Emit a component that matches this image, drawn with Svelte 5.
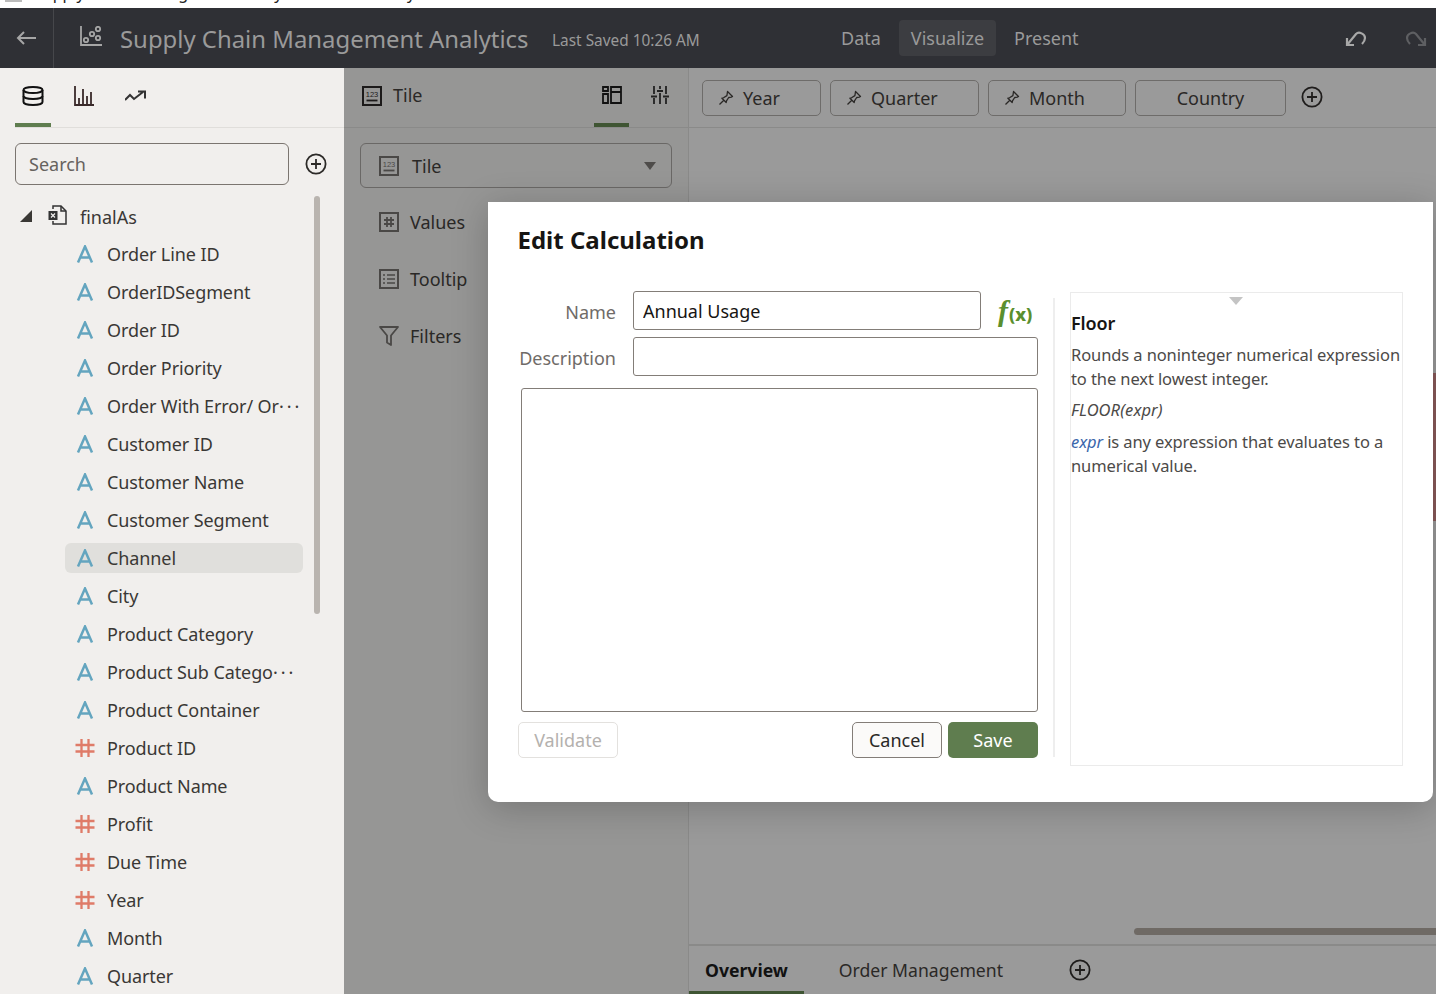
<script>
  const fields = [
    { name: "Order Line ID", type: "a" },
    { name: "OrderIDSegment", type: "a" },
    { name: "Order ID", type: "a" },
    { name: "Order Priority", type: "a" },
    { name: "Order With Error/ Or", type: "a", cut: true },
    { name: "Customer ID", type: "a" },
    { name: "Customer Name", type: "a" },
    { name: "Customer Segment", type: "a" },
    { name: "Channel", type: "a", selected: true },
    { name: "City", type: "a" },
    { name: "Product Category", type: "a" },
    { name: "Product Sub Catego", type: "a", cut: true },
    { name: "Product Container", type: "a" },
    { name: "Product ID", type: "n" },
    { name: "Product Name", type: "a" },
    { name: "Profit", type: "n" },
    { name: "Due Time", type: "n" },
    { name: "Year", type: "n" },
    { name: "Month", type: "a" },
    { name: "Quarter", type: "a" },
  ];

  const pills = [
    { name: "Year", width: 119, pin: true },
    { name: "Quarter", width: 149, pin: true },
    { name: "Month", width: 138, pin: true },
    { name: "Country", width: 151, pin: false },
  ];
</script>

{#snippet plus()}
  <svg class="plus" viewBox="0 0 22 22" fill="none" stroke="currentColor" stroke-width="1.8">
    <circle cx="11" cy="11" r="9.6" />
    <path d="M11 6v10M6 11h10" />
  </svg>
{/snippet}

{#snippet tileIcon()}
  <svg class="box-icon" viewBox="0 0 20 20" fill="none" stroke="currentColor" stroke-width="2">
    <rect x="1" y="1" width="18" height="18" />
    <text x="10" y="11" text-anchor="middle" class="mini" fill="currentColor" stroke="none">123</text>
    <path d="M4.500 14.500h11" stroke-width="1.800" />
  </svg>
{/snippet}

{#snippet pin()}
  <svg class="pin" viewBox="0 0 16 16" fill="none" stroke="currentColor" stroke-width="1.300" stroke-linejoin="round">
    <path d="M9.500 1.500l5 5-1.200.6-2.600.4-2.200 3.400-.3 1.600L3.900 8.200l1.600-.4 3.400-2.200.4-2.600zM5.800 10.200L1.500 14.500" />
  </svg>
{/snippet}

<div class="page">
  <div class="browser-strip">
    <span class="tab-icon"></span>
    <span class="browser-title">Supply Chain Management Analytics - Oracle Analytics</span>
  </div>

  <header class="topbar">
    <button class="back" aria-label="Back">
      <svg viewBox="0 0 20 14" fill="none" stroke="currentColor" stroke-width="2">
        <path d="M20 7H2M8 1L2 7l6 6" />
      </svg>
    </button>
    <svg class="logo" viewBox="0 0 22 21" fill="none" stroke="currentColor" stroke-width="1.800">
      <path d="M1 0v19h21" />
      <circle cx="6" cy="14" r="2.200" />
      <circle cx="12" cy="8" r="2.200" />
      <circle cx="18" cy="3" r="2.200" />
      <circle cx="18" cy="12" r="2.200" />
    </svg>
    <h1>Supply Chain Management Analytics</h1>
    <span class="saved">Last Saved 10:26 AM</span>
    <nav>
      <span class="nav-item">Data</span>
      <span class="nav-item active">Visualize</span>
      <span class="nav-item">Present</span>
    </nav>
    <svg class="history" viewBox="0 0 22 16" fill="none" stroke="currentColor" stroke-width="2.200">
      <path d="M9 15H2V8M2 15L11 4c3-3 9 0 9 4 0 2-1 4-3 6" />
    </svg>
    <svg class="history redo" viewBox="0 0 22 16" fill="none" stroke="currentColor" stroke-width="2.200">
      <path d="M13 15h7V8M20 15L11 4C8 1 2 4 2 8c0 2 1 4 3 6" />
    </svg>
  </header>

  <div class="body">
    <aside class="data-panel">
      <div class="panel-tabs">
        <div class="panel-tab selected">
          <svg class="db" viewBox="0 0 22 20" fill="none" stroke="#111" stroke-width="2">
            <ellipse cx="11" cy="4" rx="9.500" ry="3" />
            <path d="M1.500 4v12c0 1.700 4.200 3 9.500 3s9.500-1.300 9.500-3V4" />
            <path d="M1.500 10c0 1.700 4.200 3 9.500 3s9.500-1.300 9.500-3" />
          </svg>
        </div>
        <div class="panel-tab">
          <svg class="bars" viewBox="0 0 20 20" fill="none" stroke="#3a2a2a" stroke-width="1.800">
            <path d="M1 0v19h19M5 19v-7M9 19V3M13 19v-9M17 19V6" />
          </svg>
        </div>
        <div class="panel-tab">
          <svg class="trend" viewBox="0 0 21 12" fill="none" stroke="#333" stroke-width="2">
            <path d="M0 10l5-5 4 4 9-7M13 1.500h7v7" />
          </svg>
        </div>
      </div>

      <div class="search-row">
        <div class="search">Search</div>
        {@render plus()}
      </div>

      <div class="tree">
        <div class="tree-list">
          <div class="root">
            <span class="caret"></span>
            <svg class="file" viewBox="0 0 19 20" fill="none" stroke="#333" stroke-width="1.500">
              <path d="M5 4V1h8l5 5v13H5v-3" />
              <path d="M13 1v5h5" />
              <rect x="0.500" y="6" width="9" height="9" fill="#333" stroke="none" />
              <path d="M3 8.500l4 4M7 8.500l-4 4" stroke="#f1efed" stroke-width="1.200" />
            </svg>
            <span class="root-name">finalAs</span>
          </div>
          {#each fields as field}
            <div class="field" class:selected={field.selected}>
              {#if field.type === "a"}
                <svg class="type" viewBox="0 0 20 18" fill="none" stroke="#64a5bf" stroke-width="2.500">
                  <path d="M3 17.500L10 1.500l7 16M5.500 12.500h9" />
                </svg>
              {:else}
                <svg class="type" viewBox="0 0 20 18" fill="none" stroke="#df7b68" stroke-width="2.300">
                  <path d="M0.500 6h19M0.500 12.500h19M6.500 0v18M13.500 0v18" />
                </svg>
              {/if}
              <span class="field-name">{field.name}{#if field.cut}<span class="dots">···</span>{/if}</span>
            </div>
          {/each}
        </div>
        <div class="scrollbar"></div>
      </div>
    </aside>

    <section class="grammar">
      <div class="grammar-head">
        <span class="dark-icon">{@render tileIcon()}</span>
        <span class="grammar-title">Tile</span>
        <div class="grammar-tab selected">
          <svg class="layout-icon" viewBox="0 0 20 18" fill="none" stroke="#111" stroke-width="1.800">
            <path d="M1 1h5v4H1zM1 8h5v9H1zM9 1h10v16H9zM9 6h10" />
          </svg>
        </div>
        <div class="grammar-tab">
          <svg class="sliders" viewBox="0 0 18 18" fill="none" stroke="#222" stroke-width="1.800">
            <path d="M3 0v8M3 12v6M0 10.500h6M9 0v3M9 7v11M6 5h6M15 0v8M15 12v6M12 10.500h6" />
          </svg>
        </div>
      </div>

      <div class="viz-select">
        <span class="soft-icon">{@render tileIcon()}</span>
        <span>Tile</span>
        <span class="select-caret"></span>
      </div>

      <div class="edge-row">
        <svg class="box-icon soft-icon" viewBox="0 0 20 20" fill="none" stroke="currentColor" stroke-width="2">
          <rect x="1" y="1" width="18" height="18" />
          <path d="M5 8h10M5 12h10M8 5v10M12 5v10" stroke-width="1.800" />
        </svg>
        <span>Values</span>
      </div>
      <div class="edge-row">
        <svg class="box-icon soft-icon" viewBox="0 0 20 20" fill="none" stroke="currentColor" stroke-width="2">
          <rect x="1" y="1" width="18" height="18" />
          <path d="M4 6h2M8 6h8M4 10h2M8 10h8M4 14h2M8 14h8" stroke-width="1.500" />
        </svg>
        <span>Tooltip</span>
      </div>
      <div class="edge-row">
        <svg class="box-icon soft-icon funnel" viewBox="0 0 20 20" fill="none" stroke="currentColor" stroke-width="1.800">
          <path d="M1 1h18l-7 8.500V19l-4-2.500V9.500z" stroke-linejoin="round" />
        </svg>
        <span>Filters</span>
      </div>
    </section>

    <main class="canvas">
      <div class="filter-bar">
        {#each pills as pill}
          <div class="pill" class:no-pin={!pill.pin} style="width: {pill.width}px">
            {#if pill.pin}{@render pin()}{/if}
            <span>{pill.name}</span>
          </div>
        {/each}
        <span class="bar-plus">{@render plus()}</span>
      </div>
      <div class="canvas-area">
        <div class="h-scroll"></div>
      </div>
      <div class="sheets">
        <div class="sheet current">Overview</div>
        <div class="sheet">Order Management</div>
        <span class="sheet-plus">{@render plus()}</span>
      </div>
    </main>
  </div>

  <div class="edge-mark"></div>

  <div class="dialog">
    <h2>Edit Calculation</h2>
    <div class="dialog-body">
      <div class="editor">
        <div class="form-row">
          <label for="calc-name">Name</label>
          <input id="calc-name" class="name-input" value="Annual Usage" />
          <span class="fx"><i>f</i><b>(x)</b></span>
        </div>
        <div class="form-row">
          <label for="calc-desc">Description</label>
          <input id="calc-desc" class="desc-input" />
        </div>
        <textarea aria-label="Expression"></textarea>
        <div class="actions">
          <button class="btn validate" disabled>Validate</button>
          <span class="spacer"></span>
          <button class="btn cancel">Cancel</button>
          <button class="btn save">Save</button>
        </div>
      </div>
      <div class="divider"></div>
      <div class="help">
        <span class="help-caret"></span>
        <h3>Floor</h3>
        <p class="lead">Rounds a noninteger numerical expression to the next lowest integer.</p>
        <p class="syntax">FLOOR(expr)</p>
        <p><em>expr</em> is any expression that evaluates to a numerical value.</p>
      </div>
    </div>
  </div>
</div>

<style>
  :global(body) {
    margin: 0;
    background: #fff;
  }

  .page {
    position: relative;
    width: 1436px;
    height: 994px;
    overflow: hidden;
    font-family: "Noto Sans", "Open Sans", sans-serif;
    color: #3a3835;
  }

  .browser-strip {
    position: relative;
    height: 8px;
    overflow: hidden;
    background: #fff;
  }

  .tab-icon {
    position: absolute;
    left: 5px;
    top: 0;
    width: 17px;
    height: 2px;
    background: #bbb;
  }

  .browser-title {
    position: absolute;
    left: 34px;
    top: -19px;
    font-size: 16px;
    line-height: 24px;
    color: #222;
    white-space: nowrap;
  }

  .topbar {
    display: flex;
    align-items: center;
    height: 60px;
    background: #2f3035;
    color: #9a9a9a;
  }

  .back {
    display: flex;
    align-items: center;
    justify-content: center;
    width: 54px;
    height: 60px;
    padding: 0 2px 1px 0;
    border: 0;
    border-right: 1px solid #46474b;
    background: none;
    color: #a6a6a6;
    box-sizing: border-box;
  }

  .back svg {
    width: 20px;
    height: 14px;
  }

  .logo {
    width: 22px;
    height: 21px;
    margin: -3px 0 0 26px;
    color: #a6a6a6;
  }

  h1 {
    width: 408px;
    margin: 2px 0 0 18px;
    font-size: 23.900px;
    font-weight: 400;
    line-height: 32px;
    white-space: nowrap;
  }

  .saved {
    margin: 5px 0 0 24px;
    width: 148px;
    font-size: 15.400px;
    white-space: nowrap;
  }

  nav {
    display: flex;
    align-items: center;
    margin-left: 129px;
  }

  .nav-item {
    padding: 0 12px;
    height: 36px;
    line-height: 36px;
    font-size: 18px;
    margin-right: 6px;
  }

  .nav-item.active {
    background: #3c3d41;
    border-radius: 4px;
    color: #999;
  }

  .history {
    width: 22px;
    height: 16px;
    margin: 0 0 0 248px;
    color: #a8a8a8;
  }

  .history.redo {
    margin-left: 38px;
    color: #5e5f62;
  }

  .body {
    display: flex;
    height: 926px;
  }

  .data-panel {
    width: 344px;
    flex: none;
    background: #f1efed;
    overflow: hidden;
  }

  .panel-tabs {
    display: flex;
    height: 59px;
    margin-left: 15px;
    gap: 16px;
    border-bottom: 1px solid #e0dedb;
  }

  .panel-tab {
    position: relative;
    display: flex;
    justify-content: center;
    width: 36px;
    padding-top: 18px;
    box-sizing: border-box;
  }

  .panel-tab.selected::after,
  .grammar-tab.selected::after {
    content: "";
    position: absolute;
    left: 0;
    right: 0;
    bottom: 0;
    height: 4px;
    background: #5f7d4f;
  }

  .db {
    width: 22px;
    height: 20px;
  }

  .bars {
    width: 20px;
    height: 20px;
    margin-left: -2px;
  }

  .trend {
    width: 21px;
    height: 12px;
    margin: 4px 0 0 -4px;
  }

  .search-row {
    display: flex;
    align-items: center;
    margin: 15px 0 0 15px;
    color: #2c2a28;
  }

  .search {
    width: 274px;
    height: 42px;
    box-sizing: border-box;
    padding-left: 13px;
    border: 1px solid #7b7570;
    border-radius: 6px;
    font-size: 18px;
    line-height: 40px;
    color: #66625e;
  }

  .plus {
    display: block;
    width: 22px;
    height: 22px;
  }

  .search-row .plus {
    margin-left: 16px;
  }

  .tree {
    display: flex;
    margin-top: 11px;
  }

  .tree-list {
    width: 303px;
    flex: none;
    padding-top: 1px;
  }

  .root {
    display: flex;
    align-items: center;
    height: 38px;
    margin-bottom: 4px;
    font-size: 18px;
    padding-left: 20px;
  }

  .root-name {
    margin-top: 2px;
  }

  .caret {
    width: 0;
    height: 0;
    border-style: solid;
    border-width: 0 0 12px 12px;
    border-color: transparent transparent #3a3835 transparent;
  }

  .file {
    width: 19px;
    height: 20px;
    margin: -2px 13px 0 16px;
  }

  .field {
    display: flex;
    align-items: center;
    height: 30px;
    margin: 0 0 8px 65px;
    padding-left: 10px;
    border-radius: 6px;
    font-size: 18px;
    letter-spacing: -0.1px;
  }

  .field.selected {
    background: #e0dfdc;
  }

  .type {
    width: 20px;
    height: 18px;
    flex: none;
  }

  .field-name {
    margin-left: 12px;
    white-space: nowrap;
  }

  .dots {
    letter-spacing: 3px;
  }

  .scrollbar {
    width: 6px;
    height: 418px;
    margin: 0 0 0 11px;
    border-radius: 3px;
    background: #b9b4af;
  }

  .grammar {
    width: 345px;
    flex: none;
    background: #969695;
    border-right: 1px solid #8a8a89;
    box-sizing: border-box;
    color: #2a2826;
    font-size: 18px;
  }

  .grammar-head {
    display: flex;
    align-items: center;
    height: 59px;
    padding-left: 18px;
    border-bottom: 1px solid #8a8a89;
  }

  .dark-icon {
    color: #1c1a1a;
    display: flex;
    margin-top: -3px;
  }

  .grammar-title {
    width: 208px;
    margin: -5px 0 0 11px;
  }

  .grammar-tab {
    position: relative;
    display: flex;
    align-items: center;
    justify-content: center;
    width: 36px;
    height: 59px;
    padding-bottom: 5px;
    margin-right: 12px;
    box-sizing: border-box;
  }

  .grammar-tab.selected::after {
    background: #3f5533;
  }

  .layout-icon {
    width: 20px;
    height: 18px;
    margin-left: 1px;
  }

  .sliders {
    width: 18px;
    height: 18px;
    margin-left: 2px;
  }

  .box-icon {
    display: block;
    width: 20px;
    height: 20px;
  }

  .mini {
    font-family: "Liberation Sans", sans-serif;
    font-size: 7.500px;
  }

  .soft-icon {
    color: #4a4846;
    display: block;
  }

  .viz-select {
    display: flex;
    align-items: center;
    gap: 13px;
    width: 312px;
    height: 45px;
    margin: 15px 0 0 16px;
    padding: 0 15px 0 18px;
    box-sizing: border-box;
    border: 1px solid #6a6866;
    border-radius: 6px;
  }

  .select-caret {
    margin-left: auto;
    width: 0;
    height: 0;
    border-style: solid;
    border-width: 8px 6px 0;
    border-color: #4e4c4a transparent transparent;
  }

  .edge-row {
    display: flex;
    align-items: center;
    gap: 11px;
    height: 38px;
    margin-left: 35px;
    margin-bottom: 19px;
  }

  .viz-select + .edge-row {
    margin-top: 15px;
  }

  .funnel {
    width: 22px;
    margin: 0 -1px;
  }

  .canvas {
    flex: 1;
    display: flex;
    flex-direction: column;
    min-width: 0;
    background: #9a9a9a;
    color: #2a2826;
    font-size: 18px;
  }

  .filter-bar {
    display: flex;
    align-items: center;
    flex: none;
    height: 60px;
    padding: 1px 0 0 13px;
    gap: 9px;
    border-bottom: 1px solid #8a8a89;
    box-sizing: border-box;
  }

  .pill {
    display: flex;
    align-items: center;
    gap: 9px;
    height: 36px;
    padding-left: 15px;
    box-sizing: border-box;
    border: 1px solid #6e6c6a;
    border-radius: 5px;
  }

  .pill.no-pin {
    justify-content: center;
    padding-left: 0;
  }

  .pin {
    width: 16px;
    height: 16px;
    flex: none;
  }

  .bar-plus {
    margin: -2px 0 0 6px;
    color: #1f1d1c;
  }

  .canvas-area {
    position: relative;
    flex: 1;
    min-height: 0;
  }

  .h-scroll {
    position: absolute;
    left: 445px;
    right: 0;
    bottom: 9px;
    height: 7px;
    border-radius: 4px 0 0 4px;
    background: #6f6a65;
  }

  .sheets {
    display: flex;
    align-items: center;
    flex: none;
    height: 50px;
    box-sizing: border-box;
    border-top: 2px solid #8a8a89;
    font-size: 17.600px;
  }

  .sheet {
    position: relative;
    display: flex;
    align-items: center;
    height: 100%;
    padding: 0 16px;
    margin-right: 19px;
    white-space: nowrap;
  }

  .sheet.current {
    font-weight: 700;
    color: #111;
  }

  .sheet.current::after {
    content: "";
    position: absolute;
    left: 0;
    right: 0;
    bottom: 0;
    height: 3px;
    background: #3f5533;
  }

  .sheet-plus {
    margin: 0 0 0 31px;
    color: #1f1d1c;
  }

  .edge-mark {
    position: absolute;
    right: 0;
    top: 373px;
    width: 3px;
    height: 148px;
    background: #8a5a5a;
  }

  .dialog {
    position: absolute;
    left: 488px;
    top: 202px;
    width: 945px;
    height: 600px;
    padding: 22px 30px 0;
    box-sizing: border-box;
    background: #fff;
    border-radius: 0 0 10px 10px;
    box-shadow: 0 6px 36px rgba(0, 0, 0, 0.22);
  }

  h2 {
    margin: 0 0 0 -0.500px;
    font-size: 24px;
    font-weight: 700;
    line-height: 32px;
    color: #161513;
  }

  .dialog-body {
    display: flex;
    margin-top: 36px;
  }

  .editor {
    width: 520px;
    flex: none;
    margin-top: -1px;
  }

  .form-row {
    display: flex;
    align-items: center;
    margin-bottom: 7px;
  }

  label {
    width: 98px;
    margin: 2px 17px 0 0;
    text-align: right;
    font-size: 18px;
    color: #6f6b68;
    white-space: nowrap;
  }

  input {
    height: 39px;
    padding: 0 9px;
    box-sizing: border-box;
    border: 1px solid #837d78;
    border-radius: 3px;
    font: inherit;
    font-size: 18px;
    color: #161513;
    background: #fff;
    outline: none;
  }

  .name-input {
    width: 348px;
  }

  .desc-input {
    width: 405px;
  }

  .fx {
    display: flex;
    align-items: baseline;
    margin-left: 17px;
    color: #5a8f2e;
  }

  .fx i {
    font-family: "Liberation Serif", serif;
    font-size: 30px;
    font-weight: 700;
    line-height: 30px;
  }

  .fx b {
    margin-left: 1px;
    font-size: 18px;
    font-weight: 800;
  }

  textarea {
    display: block;
    width: 517px;
    height: 324px;
    margin: 12px 0 10px 3px;
    box-sizing: border-box;
    border: 1px solid #837d78;
    border-radius: 3px;
    resize: none;
    outline: none;
    background: #fff;
  }

  .actions {
    display: flex;
    gap: 6px;
  }

  .spacer {
    flex: 1;
  }

  .btn {
    height: 36px;
    box-sizing: border-box;
    border-radius: 5px;
    font: inherit;
    font-size: 18px;
    padding: 0;
  }

  .validate {
    width: 100px;
    border: 1px solid #e3e1de;
    background: #fff;
    color: #b4b1ae;
  }

  .cancel {
    width: 90px;
    border: 1px solid #837d78;
    background: #fbfaf9;
    color: #2a2826;
  }

  .save {
    width: 90px;
    border: 0;
    background: #5f7d4f;
    color: #fff;
  }

  .divider {
    width: 2px;
    height: 459px;
    margin: 6px 0 0 15px;
    background: #eeeeee;
  }

  .help {
    position: relative;
    width: 333px;
    height: 474px;
    margin-left: 15px;
    box-sizing: border-box;
    border: 1px solid #ebebeb;
    padding-top: 18px;
    font-size: 16.500px;
    letter-spacing: -0.1px;
    line-height: 24px;
    color: #4c4a48;
  }

  .help-caret {
    position: absolute;
    left: 158px;
    top: 4px;
    width: 0;
    height: 0;
    border-style: solid;
    border-width: 8px 7px 0;
    border-color: #c4c4c4 transparent transparent;
  }

  h3 {
    margin: 0 0 8px;
    font-size: 18px;
    font-weight: 600;
    line-height: 24px;
    color: #161513;
  }

  p {
    margin: 0 0 8px;
  }

  .lead {
    margin-bottom: 7px;
  }

  .syntax {
    font-style: italic;
    letter-spacing: 0.1px;
  }

  em {
    color: #3b66ab;
  }
</style>
